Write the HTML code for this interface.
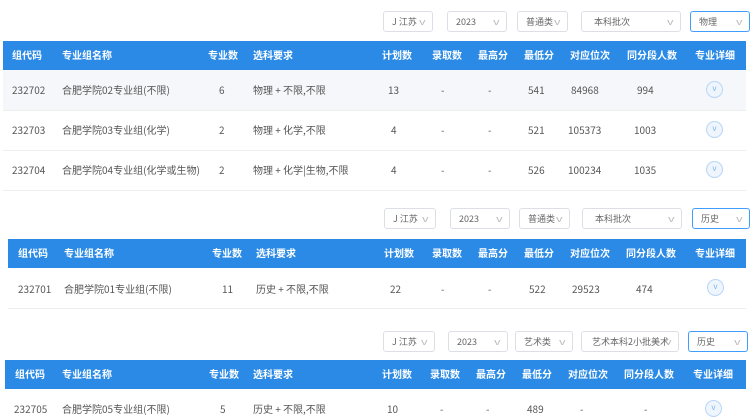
<!DOCTYPE html><html><head><meta charset="utf-8"><style>
*{margin:0;padding:0;box-sizing:border-box}
body{width:756px;height:420px;overflow:hidden;background:#fff;font-family:"Noto Sans CJK SC","Liberation Sans",sans-serif;font-size:10px;line-height:12px;color:#555;position:relative}
.a{position:absolute;white-space:nowrap}
.hd{position:absolute;height:29px;background:#2a8ae6;right:10px}
.hd span{position:absolute;top:8px;color:#fff;font-weight:bold;font-size:10px;line-height:12px}
.row span{position:absolute;font-size:10px;line-height:12px;color:#555;white-space:nowrap}
.sel{position:absolute;height:21px;border:1px solid #dcdfe6;border-radius:3px;font-size:9px;line-height:11px;color:#666;padding:4px 0 0 8px;white-space:nowrap}
.sel i{position:absolute;right:7px;top:4px;font-style:normal;color:#bbb;font-size:9px;line-height:11px;transform:scaleX(1.4)}
.sel.b{border-color:#409eff}
.ic{position:absolute;width:17px;height:17px;border-radius:50%;border:1px solid #b9d6f5;background:#eef5fd;color:#7ab3ea;font-size:8px;text-align:center;line-height:14px}
.line{position:absolute;height:1px;background:#eee}
</style></head><body>

<div class="sel" style="left:383px;top:11px;width:50px">J 江苏<i>v</i></div>
<div class="sel" style="left:447px;top:11px;width:60px">2023<i>v</i></div>
<div class="sel" style="left:517px;top:11px;width:51px">普通类<i>v</i></div>
<div class="sel" style="left:581px;top:11px;width:100px;padding-left:12px">本科批次<i>v</i></div>
<div class="sel b" style="left:690px;top:11px;width:60px">物理<i>v</i></div>

<div class="hd" style="left:3px;top:41px;right:10px">
<span style="left:9px">组代码</span><span style="left:59px">专业组名称</span><span style="left:205px">专业数</span><span style="left:250px">选科要求</span><span style="left:379px">计划数</span><span style="left:429px">录取数</span><span style="left:475px">最高分</span><span style="left:521px">最低分</span><span style="left:567px">对应位次</span><span style="left:624px">同分段人数</span><span style="left:692px">专业详细</span></div>

<div class="a" style="left:3px;top:70px;width:743px;height:40px;background:#f5f7fa"></div>
<div class="row">
<span style="left:12px;top:84px">232702</span><span style="left:62px;top:84px">合肥学院02专业组(不限)</span><span style="left:219px;top:84px">6</span><span style="left:253px;top:84px">物理 + 不限,不限</span><span style="left:388px;top:84px">13</span><span style="left:441px;top:84px">-</span><span style="left:488px;top:84px">-</span><span style="left:528px;top:84px">541</span><span style="left:571px;top:84px">84968</span><span style="left:637px;top:84px">994</span>
<span style="left:12px;top:124px">232703</span><span style="left:62px;top:124px">合肥学院03专业组(化学)</span><span style="left:219px;top:124px">2</span><span style="left:253px;top:124px">物理 + 化学,不限</span><span style="left:391px;top:124px">4</span><span style="left:441px;top:124px">-</span><span style="left:488px;top:124px">-</span><span style="left:528px;top:124px">521</span><span style="left:568px;top:124px">105373</span><span style="left:634px;top:124px">1003</span>
<span style="left:12px;top:164px">232704</span><span style="left:62px;top:164px">合肥学院04专业组(化学或生物)</span><span style="left:219px;top:164px">2</span><span style="left:253px;top:164px">物理 + 化学|生物,不限</span><span style="left:391px;top:164px">4</span><span style="left:441px;top:164px">-</span><span style="left:488px;top:164px">-</span><span style="left:528px;top:164px">526</span><span style="left:568px;top:164px">100234</span><span style="left:634px;top:164px">1035</span>
</div>
<div class="ic" style="left:706px;top:81px">v</div>
<div class="ic" style="left:706px;top:121px">v</div>
<div class="ic" style="left:706px;top:161px">v</div>
<div class="line" style="left:3px;top:110px;width:743px"></div>
<div class="line" style="left:3px;top:150px;width:743px"></div>
<div class="line" style="left:3px;top:190px;width:743px"></div>

<div class="sel" style="left:384px;top:208px;width:52px">J 江苏<i>v</i></div>
<div class="sel" style="left:450px;top:208px;width:60px">2023<i>v</i></div>
<div class="sel" style="left:519px;top:208px;width:51px">普通类<i>v</i></div>
<div class="sel" style="left:582px;top:208px;width:100px;padding-left:12px">本科批次<i>v</i></div>
<div class="sel b" style="left:692px;top:208px;width:58px">历史<i>v</i></div>

<div class="hd" style="left:8px;top:239px;right:10px">
<span style="left:10px">组代码</span><span style="left:56px">专业组名称</span><span style="left:204px">专业数</span><span style="left:248px">选科要求</span><span style="left:376px">计划数</span><span style="left:424px">录取数</span><span style="left:470px">最高分</span><span style="left:516px">最低分</span><span style="left:562px">对应位次</span><span style="left:618px">同分段人数</span><span style="left:687px">专业详细</span></div>
<div class="row">
<span style="left:18px;top:283px">232701</span><span style="left:64px;top:283px">合肥学院01专业组(不限)</span><span style="left:222px;top:283px">11</span><span style="left:256px;top:283px">历史 + 不限,不限</span><span style="left:390px;top:283px">22</span><span style="left:441px;top:283px">-</span><span style="left:488px;top:283px">-</span><span style="left:529px;top:283px">522</span><span style="left:572px;top:283px">29523</span><span style="left:636px;top:283px">474</span>
</div>
<div class="ic" style="left:707px;top:279px">v</div>
<div class="line" style="left:8px;top:308px;width:738px"></div>

<div class="sel" style="left:383px;top:331px;width:52px">J 江苏<i>v</i></div>
<div class="sel" style="left:448px;top:331px;width:60px">2023<i>v</i></div>
<div class="sel" style="left:515px;top:331px;width:58px">艺术类<i>v</i></div>
<div class="sel" style="left:581px;top:331px;width:98px;padding-left:10px">艺术本科2小批美术<i>v</i></div>
<div class="sel b" style="left:688px;top:331px;width:60px">历史<i>v</i></div>

<div class="hd" style="left:5px;top:360px;right:10px">
<span style="left:10px">组代码</span><span style="left:57px">专业组名称</span><span style="left:204px">专业数</span><span style="left:248px">选科要求</span><span style="left:377px">计划数</span><span style="left:425px">录取数</span><span style="left:471px">最高分</span><span style="left:517px">最低分</span><span style="left:563px">对应位次</span><span style="left:619px">同分段人数</span><span style="left:688px">专业详细</span></div>
<div class="row">
<span style="left:14px;top:403px">232705</span><span style="left:62px;top:403px">合肥学院05专业组(不限)</span><span style="left:220px;top:403px">5</span><span style="left:253px;top:403px">历史 + 不限,不限</span><span style="left:387px;top:403px">10</span><span style="left:440px;top:403px">-</span><span style="left:486px;top:403px">-</span><span style="left:527px;top:403px">489</span><span style="left:580px;top:403px">-</span><span style="left:644px;top:403px">-</span>
</div>
<div class="ic" style="left:705px;top:400px">v</div>
</body></html>
